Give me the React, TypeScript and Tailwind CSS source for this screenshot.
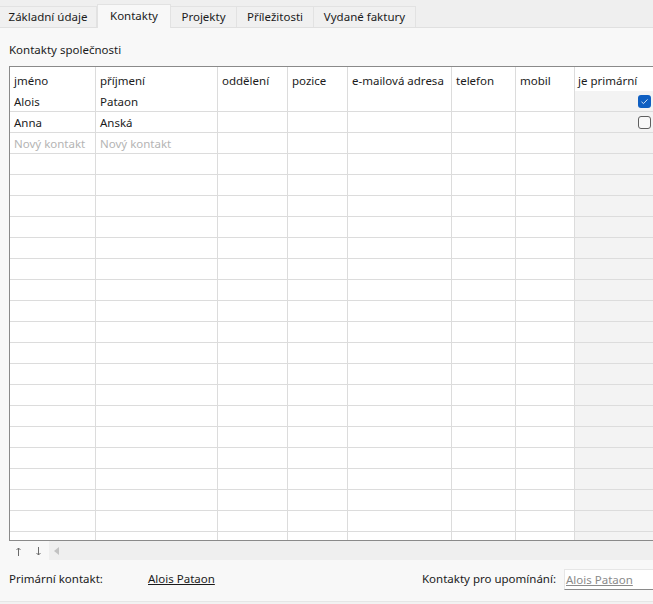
import React from "react";

const cols = [
  { label: "jméno", w: "w-[86px]" },
  { label: "příjmení", w: "w-[122px]" },
  { label: "oddělení", w: "w-[70px]" },
  { label: "pozice", w: "w-[60px]" },
  { label: "e-mailová adresa", w: "w-[104px]" },
  { label: "telefon", w: "w-[64px]" },
  { label: "mobil", w: "w-[59px]" },
];

const tabs = [
  { label: "Základní údaje", w: "w-[97px]" },
  { label: "Kontakty", w: "w-[74px]", active: true },
  { label: "Projekty", w: "w-[66px]" },
  { label: "Příležitosti", w: "w-[77px]" },
  { label: "Vydané faktury", w: "w-[102px]" },
];

type Row = { first: string; last: string; placeholder?: boolean; primary?: boolean | null };

const rows: Row[] = [
  { first: "Alois", last: "Pataon", primary: true },
  { first: "Anna", last: "Anská", primary: false },
  { first: "Nový kontakt", last: "Nový kontakt", placeholder: true, primary: null },
  ...Array.from({ length: 18 }, () => ({ first: "", last: "", primary: null })),
];

function Check({ on }: { on: boolean }) {
  return on ? (
    <div className="w-[13px] h-[13px] rounded-[3px] bg-[#0f5fc2] flex items-center justify-center">
      <svg width="9" height="9" viewBox="0 0 9 9">
        <path d="M1.5 4.8 L3.5 6.6 L7.5 2.4" stroke="#cfe0f5" strokeWidth="1" fill="none" />
      </svg>
    </div>
  ) : (
    <div className="w-[13px] h-[13px] rounded-[3px] border border-[#5f5f5f] bg-[#f8f8f8]" />
  );
}

export default function App() {
  return (
    <div className="w-[653px] h-[604px] bg-[#f8f8f8] overflow-hidden text-[11.5px] text-[#1b1b1b] font-['Noto_Sans',sans-serif] flex flex-col">
      {/* tabs */}
      <div className="h-[28px] bg-[#efefef] border-b border-[#e0e0e0] flex items-end shrink-0">
        {tabs.map((t) =>
          t.active ? (
            <div
              key={t.label}
              className={`${t.w} h-[24px] -mb-px bg-[#f8f8f8] border border-b-0 border-[#e2e2e2] flex items-center justify-center pb-[2px]`}
            >
              {t.label}
            </div>
          ) : (
            <div
              key={t.label}
              className={`${t.w} h-[21px] bg-[#f0f0f0] border-t border-r border-[#e2e2e2] flex items-center justify-center`}
            >
              {t.label}
            </div>
          )
        )}
      </div>

      <div className="pl-[9px] pt-[13px] h-[38px] leading-[18px] shrink-0">Kontakty společnosti</div>

      {/* grid */}
      <div className="ml-[9px] h-[475px] border-t border-l border-b border-[#8a8a8a] bg-white overflow-hidden shrink-0">
        <div className="flex h-[24px]">
          {cols.map((c) => (
            <div key={c.label} className={`${c.w} shrink-0 border-r border-[#dcdcdc] pl-[4px] pt-[5px] whitespace-nowrap`}>
              {c.label}
            </div>
          ))}
          <div className="w-[100px] shrink-0 pl-[3px] pt-[5px] whitespace-nowrap">je primární</div>
        </div>
        {rows.map((r, i) => (
          <div key={i} className="flex h-[21px] border-b border-[#dcdcdc]">
            {cols.map((c, j) => (
              <div
                key={c.label}
                className={`${c.w} shrink-0 border-r border-[#dcdcdc] pl-[4px] leading-[21px] whitespace-nowrap ${
                  r.placeholder ? "text-[#b4b4b4]" : ""
                }`}
              >
                {j === 0 ? r.first : j === 1 ? r.last : ""}
              </div>
            ))}
            <div className="w-[100px] shrink-0 bg-[#f3f3f3] flex items-center pl-[63px]">
              {r.primary !== null && r.primary !== undefined && <Check on={r.primary} />}
            </div>
          </div>
        ))}
        <div className="flex h-[10px]">
          {cols.map((c) => (
            <div key={c.label} className={`${c.w} shrink-0 border-r border-[#dcdcdc]`} />
          ))}
          <div className="w-[100px] shrink-0 bg-[#f3f3f3]" />
        </div>
      </div>

      {/* scroll strip */}
      <div className="ml-[9px] h-[19px] flex shrink-0">
        <div className="w-[40px] flex items-center gap-[15px] pl-[7px] pt-[2px]">
          <svg width="5" height="9" viewBox="0 0 5 9">
            <path d="M2.5 1 V9 M0.5 3 L2.5 1 L4.5 3" stroke="#6a6a6a" strokeWidth="1" fill="none" />
          </svg>
          <svg width="5" height="9" viewBox="0 0 5 9">
            <path d="M2.5 0 V8 M0.5 6 L2.5 8 L4.5 6" stroke="#6a6a6a" strokeWidth="1" fill="none" />
          </svg>
        </div>
        <div className="flex-1 bg-[#efefef] flex items-center pl-[5px]">
          <svg width="6" height="8" viewBox="0 0 6 8">
            <path d="M5 0 L5 8 L0 4 Z" fill="#c2c2c2" />
          </svg>
        </div>
      </div>

      {/* footer */}
      <div className="flex items-start h-[41px] pt-[10px] shrink-0">
        <div className="w-[148px] pl-[9px] leading-[18px]">Primární kontakt:</div>
        <div className="underline leading-[18px]">Alois Pataon</div>
        <div className="ml-auto leading-[18px] mr-[8px]">Kontakty pro upomínání:</div>
        <div className="w-[89px] h-[21px] -mt-[1px] bg-white border-l border-t border-[#e6e6e6] border-b border-b-[#8a8a8a] text-[#8a8a8a] underline pl-[1px] leading-[20px] whitespace-nowrap">
          Alois Pataon
        </div>
      </div>
      <div className="flex-1 border-t border-[#e6e6e6] bg-[#f2f2f2]" />
    </div>
  );
}
